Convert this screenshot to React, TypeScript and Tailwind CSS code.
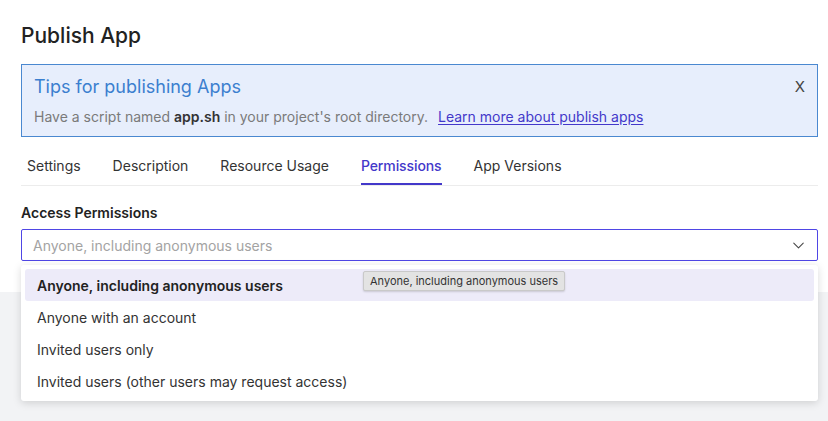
import { ChevronDown } from 'lucide-react';

const tabs = ['Settings', 'Description', 'Resource Usage', 'Permissions', 'App Versions'];

const options = [
  'Anyone, including anonymous users',
  'Anyone with an account',
  'Invited users only',
  'Invited users (other users may request access)',
];

export default function App() {
  return (
    <div className="h-[421px] w-[828px] overflow-hidden bg-[#f2f3f5] font-['Inter',sans-serif]">
      <div className="h-[292px] bg-white px-[21px] pt-[22px] pr-[10px]">
        <h1 className="text-[21px] leading-[28px] font-medium text-[#222]">Publish App</h1>

        {/* Tips banner */}
        <div className="mt-[14px] flex items-start justify-between border border-[#4a88d0] bg-[#e7eefc] px-3 pt-[10px] pb-[9px]">
          <div>
            <div className="text-[18px] leading-[24px] text-[#3b7fcf]">Tips for publishing Apps</div>
            <div className="mt-[8px] text-[14px] leading-[20px] text-[#7a7a7a]">
              Have a script named <b className="font-semibold text-[#333]">app.sh</b> in your project's root directory.
              <a className="ml-[10px] text-[#4338ca] underline underline-offset-2">Learn more about publish apps</a>
            </div>
          </div>
          <button className="mt-[2px] text-[15px] leading-[20px] text-[#444]">X</button>
        </div>

        {/* Tabs */}
        <div className="mt-[19px] flex gap-8 border-b border-[#ececec] pl-[6px]">
          {tabs.map((t) => (
            <div
              key={t}
              className={
                t === 'Permissions'
                  ? 'border-b-2 border-[#4338ca] pb-[7px] text-[14px] leading-[20px] font-medium tracking-[-0.1px] text-[#4338ca]'
                  : 'border-b-2 border-transparent pb-[7px] text-[14px] leading-[20px] text-[#333]'
              }
            >
              {t}
            </div>
          ))}
        </div>

        <div className="mt-[17px] text-[14px] leading-[20px] font-semibold text-[#222]">Access Permissions</div>

        {/* Select + open menu */}
        <div className="relative mt-[6px]">
          <div className="flex h-8 items-center justify-between rounded-[2px] border border-[#4f46e5] bg-white pr-[9px] pl-[11px]">
            <span className="text-[14px] text-[#a3a3a3]">Anyone, including anonymous users</span>
            <ChevronDown className="h-[19px] w-[19px] text-[#444]" strokeWidth={1.3} />
          </div>

          <div className="absolute top-[36px] right-0 left-0 z-10 rounded-[3px] bg-white p-1 shadow-[0_2px_8px_rgba(0,0,0,0.15)]">
            {options.map((o, i) => (
              <div
                key={o}
                className={
                  i === 0
                    ? 'relative flex h-8 items-center rounded-[3px] bg-[#edebf9] px-3 text-[14px] font-semibold text-[#222]'
                    : 'flex h-8 items-center px-3 text-[14px] text-[#333]'
                }
              >
                {o}
                {i === 0 && (
                  <span className="absolute top-[2px] left-[338px] rounded-[2px] border border-[#c9c9c9] bg-[#e3e3e3] px-[6px] py-[2px] text-[11px] leading-[14px] font-normal text-[#333] shadow-[0_1px_2px_rgba(0,0,0,0.15)]">
                    Anyone, including anonymous users
                  </span>
                )}
              </div>
            ))}
          </div>
        </div>
      </div>
    </div>
  );
}
